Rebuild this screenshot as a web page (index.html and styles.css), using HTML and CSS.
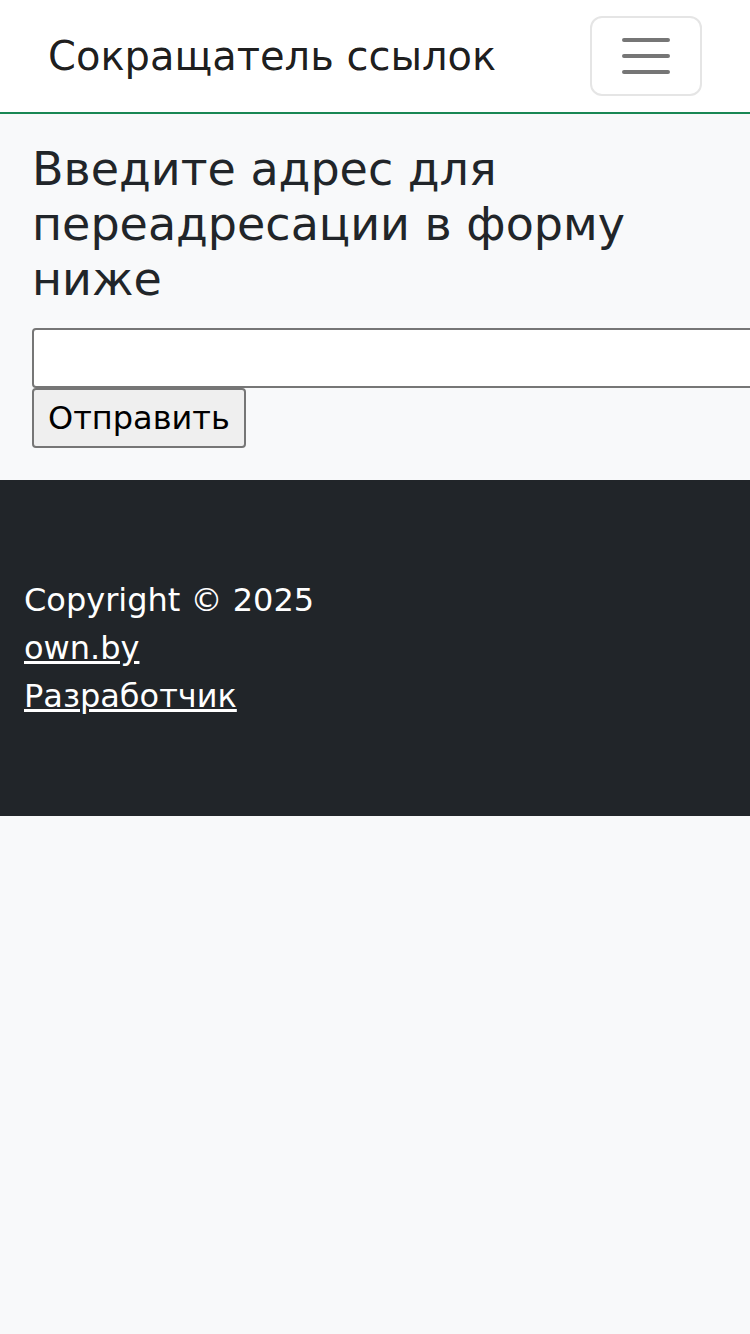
FILE: index.html
```html
<!DOCTYPE html>
<html lang="ru">
<head>
<meta charset="utf-8">
<title>Сокращатель ссылок</title>
<link rel="stylesheet" href="styles.css">
</head>
<body>
<header class="navbar">
  <a class="brand" href="#">Сокращатель ссылок</a>
  <button class="toggler" type="button" aria-label="Меню">
    <svg class="toggler-icon" viewBox="0 0 30 30" width="60" height="60">
      <path d="M4 7h22M4 15h22M4 23h22" stroke="#767676" stroke-width="2" stroke-linecap="round" fill="none"/>
    </svg>
  </button>
</header>
<main class="content">
  <h3 class="title">Введите адрес для переадресации в форму ниже</h3>
  <form class="form">
    <input class="url-input" type="text">
    <button class="submit" type="button">Отправить</button>
  </form>
</main>
<footer class="footer">
  <div class="footer-line">Copyright © 2025</div>
  <div class="footer-line"><a href="#">own.by</a></div>
  <div class="footer-line"><a href="#">Разработчик</a></div>
</footer>
</body>
</html>
```
FILE: styles.css
```css
html, body {
  margin: 0;
  padding: 0;
  overflow-x: hidden;
}
body {
  background: #f8f9fa;
  font-family: "DejaVu Sans", sans-serif;
  font-size: 32px;
  line-height: 1.5;
  color: #212529;
}
.navbar {
  background: #ffffff;
  border-bottom: 2px solid #198754;
  display: flex;
  align-items: center;
  justify-content: space-between;
  padding: 16px 48px;
}
.brand {
  font-size: 40px;
  line-height: 60px;
  color: rgba(0, 0, 0, 0.9);
  text-decoration: none;
}
.toggler {
  width: 112px;
  height: 80px;
  box-sizing: border-box;
  padding: 8px 24px;
  background: transparent;
  border: 2px solid #e5e5e5;
  border-radius: 12px;
  display: flex;
  align-items: center;
  justify-content: center;
}
.toggler-icon {
  display: block;
}
.content {
  padding: 28px 0 32px 32px;
  overflow: hidden;
}
.title {
  font-size: 46px;
  font-weight: 400;
  line-height: 1.2;
  margin: 0 32px 20px 0;
}
.form {
  margin: 0;
}
.url-input {
  display: block;
  box-sizing: border-box;
  width: 760px;
  height: 60px;
  margin: 0;
  border: 2px solid #767676;
  border-radius: 4px;
  background: #ffffff;
  font-family: inherit;
  font-size: 32px;
}
.submit {
  display: block;
  box-sizing: border-box;
  height: 60px;
  margin: 0;
  padding: 0 14px;
  border: 2px solid #767676;
  border-radius: 4px;
  background: #efefef;
  color: #000000;
  font-family: inherit;
  font-size: 32px;
  line-height: 1.5;
}
.footer {
  background: #212529;
  color: #ffffff;
  padding: 96px 24px;
}
.footer-line {
  line-height: 48px;
}
.footer a {
  color: #ffffff;
  text-decoration: underline;
}
```
